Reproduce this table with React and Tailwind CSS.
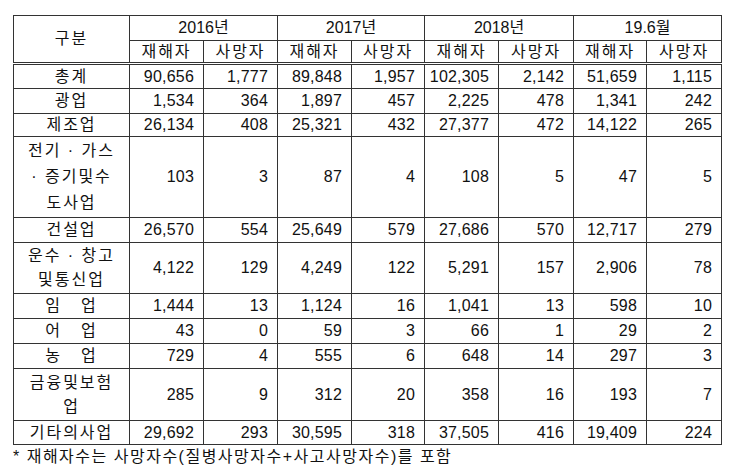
import React from 'react';

const rows = [
  { label: ['총계'], h: 'h-[25px]', v: ['90,656', '1,777', '89,848', '1,957', '102,305', '2,142', '51,659', '1,115'] },
  { label: ['광업'], h: 'h-[25px]', v: ['1,534', '364', '1,897', '457', '2,225', '478', '1,341', '242'] },
  { label: ['제조업'], h: 'h-[23px]', v: ['26,134', '408', '25,321', '432', '27,377', '472', '14,122', '265'] },
  { label: ['전기 · 가스', '· 증기및수', '도사업'], h: 'h-[81px]', v: ['103', '3', '87', '4', '108', '5', '47', '5'] },
  { label: ['건설업'], h: 'h-[25px]', v: ['26,570', '554', '25,649', '579', '27,686', '570', '12,717', '279'] },
  { label: ['운수 · 창고', '및통신업'], h: 'h-[51px]', v: ['4,122', '129', '4,249', '122', '5,291', '157', '2,906', '78'] },
  { label: ['임', '업'], spaced: true, h: 'h-[24px]', v: ['1,444', '13', '1,124', '16', '1,041', '13', '598', '10'] },
  { label: ['어', '업'], spaced: true, h: 'h-[25px]', v: ['43', '0', '59', '3', '66', '1', '29', '2'] },
  { label: ['농', '업'], spaced: true, h: 'h-[24px]', v: ['729', '4', '555', '6', '648', '14', '297', '3'] },
  { label: ['금융및보험', '업'], h: 'h-[52px]', v: ['285', '9', '312', '20', '358', '16', '193', '7'] },
  { label: ['기타의사업'], h: 'h-[24px]', v: ['29,692', '293', '30,595', '318', '37,505', '416', '19,409', '224'] },
];

const years = ['2016년', '2017년', '2018년', '19.6월'];
const cell = 'border border-[#333] p-0';
const ko = 'tracking-[2px]';

const Label = ({ row }) => {
  if (row.spaced) {
    return (
      <span className="inline-flex gap-[19px] leading-[18px]">
        <span>{row.label[0]}</span>
        <span>{row.label[1]}</span>
      </span>
    );
  }
  if (row.label.length === 1) {
    return <div className="leading-[18px]">{row.label[0]}</div>;
  }
  return (
    <div className={row.label.length === 3 ? 'leading-[26px]' : 'leading-[24px]'}>
      {row.label.map((line) => (
        <div key={line}>{line}</div>
      ))}
    </div>
  );
};

export default function App() {
  return (
    <div
      className="min-h-[476px] w-[745px] bg-white text-[16px] text-[#111]"
      style={{ fontFamily: '"Liberation Sans", "Noto Sans CJK KR", sans-serif' }}
    >
      <div className="pl-[13px] pt-[15px]">
        <table className="w-[708px] table-fixed border-collapse">
          <colgroup>
            <col className="w-[116px]" />
            <col className="w-[74px]" />
            <col className="w-[74px]" />
            <col className="w-[74px]" />
            <col className="w-[73px]" />
            <col className="w-[74px]" />
            <col className="w-[75px]" />
            <col className="w-[73px]" />
            <col className="w-[75px]" />
          </colgroup>
          <thead>
            <tr className="h-[25px]">
              <th
                rowSpan={2}
                className={`${cell} ${ko} border-b-[3px] font-normal leading-[18px] [border-bottom-style:double]`}
              >
                구분
              </th>
              {years.map((y) => (
                <th key={y} colSpan={2} className={`${cell} font-normal leading-[18px]`}>
                  {y}
                </th>
              ))}
            </tr>
            <tr className="h-[23px]">
              {years.map((y) => (
                <React.Fragment key={y}>
                  <th className={`${cell} ${ko} border-b-[3px] font-normal leading-[18px] [border-bottom-style:double]`}>
                    재해자
                  </th>
                  <th className={`${cell} ${ko} border-b-[3px] font-normal leading-[18px] [border-bottom-style:double]`}>
                    사망자
                  </th>
                </React.Fragment>
              ))}
            </tr>
          </thead>
          <tbody>
            {rows.map((row) => (
              <tr key={row.label.join('')} className={row.h}>
                <td className={`${cell} ${ko} text-center`}>
                  <Label row={row} />
                </td>
                {row.v.map((n, i) => (
                  <td key={i} className={`${cell} pr-[9px] text-right leading-[18px] tracking-[0.2px]`}>
                    {n}
                  </td>
                ))}
              </tr>
            ))}
          </tbody>
        </table>
        <p className="mt-[1px] leading-[22px] tracking-[1.5px]">
          * 재해자수는 사망자수(질병사망자수+사고사망자수)를 포함
        </p>
      </div>
    </div>
  );
}
